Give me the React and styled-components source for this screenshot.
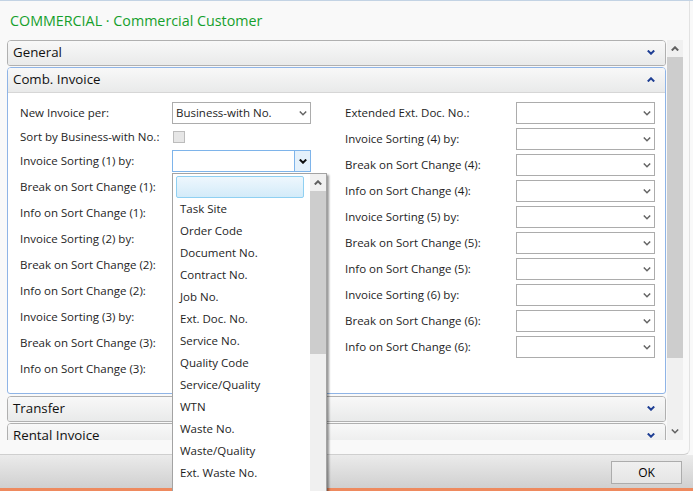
import React from 'react';
import styled, { createGlobalStyle, css } from 'styled-components';

const GlobalStyle = createGlobalStyle`
  html, body {
    margin: 0;
    padding: 0;
    background: #f9f9f9;
  }
  body {
    font-family: 'Open Sans', 'Noto Sans', sans-serif;
    font-size: 11.5px;
    color: #1e1e1e;
  }
`;

const leftRows = [
  { label: 'New Invoice per:', kind: 'select', value: 'Business-with No.' },
  { label: 'Sort by Business-with No.:', kind: 'check', h: 22 },
  { label: 'Invoice Sorting (1) by:', kind: 'focus' },
  { label: 'Break on Sort Change (1):', kind: 'select' },
  { label: 'Info on Sort Change (1):', kind: 'select' },
  { label: 'Invoice Sorting (2) by:', kind: 'select' },
  { label: 'Break on Sort Change (2):', kind: 'select' },
  { label: 'Info on Sort Change (2):', kind: 'select' },
  { label: 'Invoice Sorting (3) by:', kind: 'select' },
  { label: 'Break on Sort Change (3):', kind: 'select' },
  { label: 'Info on Sort Change (3):', kind: 'select' },
];

const rightRows = [
  'Extended Ext. Doc. No.:',
  'Invoice Sorting (4) by:',
  'Break on Sort Change (4):',
  'Info on Sort Change (4):',
  'Invoice Sorting (5) by:',
  'Break on Sort Change (5):',
  'Info on Sort Change (5):',
  'Invoice Sorting (6) by:',
  'Break on Sort Change (6):',
  'Info on Sort Change (6):',
];

const options = [
  'Task Site',
  'Order Code',
  'Document No.',
  'Contract No.',
  'Job No.',
  'Ext. Doc. No.',
  'Service No.',
  'Quality Code',
  'Service/Quality',
  'WTN',
  'Waste No.',
  'Waste/Quality',
  'Ext. Waste No.',
  'Notification No.',
];

const Chevron = ({ up, color = '#1f3f94', sw = 2 }) => (
  <svg width="8" height="5" viewBox="0 0 8 5">
    <polyline
      points={up ? '0.8,4.5 4,1.3 7.2,4.5' : '0.8,0.5 4,3.7 7.2,0.5'}
      fill="none"
      stroke={color}
      strokeWidth={sw}
    />
  </svg>
);

const Window = styled.div`
  position: relative;
  width: 693px;
  height: 491px;
  border-top: 1px solid #c3d3e4;
  box-sizing: border-box;
  display: flex;
  flex-direction: column;
  overflow: hidden;
`;

const Content = styled.div`
  height: 454px;
  flex: none;
  margin-right: 3px;
  border-right: 1px solid #e2e2e2;
  border-bottom: 1px solid #cfcfcf;
  border-bottom-right-radius: 6px;
  box-sizing: border-box;
`;

const Title = styled.div`
  height: 39px;
  padding: 9px 0 0 10px;
  box-sizing: border-box;
  font-size: 14.3px;
  line-height: 22px;
  color: #15a02c;
`;

const Main = styled.div`
  display: flex;
  height: 400px;
  padding-left: 7px;
`;

const Viewport = styled.div`
  width: 659px;
  height: 400px;
  overflow: hidden;
  display: flex;
  flex-direction: column;
  gap: 1px;
`;

const ScrollBar = styled.div`
  width: 16px;
  flex: none;
  margin-left: 1px;
  background: #f0f0f0;
  display: flex;
  flex-direction: column;
  height: ${(p) => p.$h}px;
`;

const ScrollButton = styled.div`
  height: 17px;
  flex: none;
  display: flex;
  align-items: center;
  justify-content: center;
`;

const Thumb = styled.div`
  height: ${(p) => p.$h}px;
  flex: none;
  background: #cdcdcd;
`;

const Track = styled.div`
  flex: 1;
`;

const Panel = styled.div`
  flex: none;
  border: 1px solid ${(p) => (p.$open ? '#8fb4e6' : '#b0b0b0')};
  border-radius: 4px 4px 3px 3px;
  background: #fff;
  overflow: hidden;
  ${(p) =>
    p.$gapAfter &&
    css`
      margin-bottom: 1px;
    `}
`;

const PanelHeader = styled.div`
  height: 24px;
  box-sizing: border-box;
  display: flex;
  align-items: center;
  justify-content: space-between;
  padding: 0 10px 2px 5px;
  background: linear-gradient(#f8f8f8, #e9eaea);
  font-size: 13.3px;
  color: #111;
  ${(p) =>
    p.$open &&
    css`
      height: 25px;
      border-bottom: 1px solid #d6d6d6;
    `}
`;

const PanelBody = styled.div`
  display: flex;
  gap: 34px;
  padding: 7px 9px 11px 12px;
`;

const Column = styled.div`
  display: flex;
  flex-direction: column;
`;

const Row = styled.div`
  display: flex;
  align-items: center;
  height: ${(p) => p.$h || 26}px;
`;

const Label = styled.div`
  width: ${(p) => p.$w}px;
  flex: none;
  white-space: nowrap;
  padding-bottom: 1px;
`;

const Field = styled.div`
  width: 139px;
  height: 22px;
  box-sizing: border-box;
  display: flex;
  align-items: stretch;
  background: #fff;
  border: 1px solid ${(p) => (p.$focus ? '#7eb4ea' : '#acacac')};
`;

const FieldText = styled.div`
  flex: 1;
  padding-left: 3px;
  line-height: 19px;
  white-space: nowrap;
  overflow: hidden;
`;

const FieldButton = styled.div`
  width: 15px;
  display: flex;
  align-items: center;
  justify-content: center;
  ${(p) =>
    p.$focus &&
    css`
      background: #e5f1fb;
      border-left: 1px solid #7eb4ea;
    `}
`;

const Check = styled.div`
  width: 12px;
  height: 12px;
  margin-left: 1px;
  box-sizing: border-box;
  background: #e6e6e6;
  border: 1px solid #bcbcbc;
`;

const Footer = styled.div`
  flex: 1;
  display: flex;
  justify-content: flex-end;
  align-items: flex-start;
  padding: 6px 11px 0 0;
  background: linear-gradient(#ebebeb, #d0d0d0);
`;

const OkButton = styled.div`
  width: 71px;
  height: 23px;
  box-sizing: border-box;
  border: 1px solid #acacac;
  background: linear-gradient(#f0f0f0, #e5e5e5);
  display: flex;
  align-items: center;
  justify-content: center;
  font-size: 12px;
  color: #000;
`;

const AccentLine = styled.div`
  height: 3px;
  flex: none;
  background: #ee8a5f;
`;

const DropList = styled.div`
  position: absolute;
  left: 172px;
  top: 172px;
  width: 155px;
  height: 340px;
  box-sizing: border-box;
  border: 1px solid #a3a3a3;
  background: #fff;
  box-shadow: 2px 2px 2px rgba(0, 0, 0, 0.4);
  display: flex;
`;

const Options = styled.div`
  flex: 1;
  padding: 2px 5px 0 3px;
`;

const Option = styled.div`
  height: 22px;
  box-sizing: border-box;
  padding-left: 4px;
  line-height: 21px;
  white-space: nowrap;
  ${(p) =>
    p.$selected &&
    css`
      border: 1px solid #8fd0f2;
      border-radius: 2px;
      background: linear-gradient(#eef7fd, #d3ebf9);
    `}
`;

const FieldSelect = ({ value, focus }) => (
  <Field $focus={focus}>
    <FieldText>{value}</FieldText>
    <FieldButton $focus={focus}>
      <Chevron color={focus ? '#111' : '#666'} sw={focus ? 2 : 1.5} />
    </FieldButton>
  </Field>
);

const CollapsedPanel = ({ title }) => (
  <Panel>
    <PanelHeader>
      {title}
      <Chevron />
    </PanelHeader>
  </Panel>
);

export default function App() {
  return (
    <>
      <GlobalStyle />
      <Window>
        <Content>
          <Title>COMMERCIAL · Commercial Customer</Title>
          <Main>
            <Viewport>
              <CollapsedPanel title="General" />
              <Panel $open $gapAfter>
                <PanelHeader $open>
                  Comb. Invoice
                  <Chevron up />
                </PanelHeader>
                <PanelBody>
                  <Column>
                    {leftRows.map((r) => (
                      <Row key={r.label} $h={r.h}>
                        <Label $w={152}>{r.label}</Label>
                        {r.kind === 'check' ? (
                          <Check />
                        ) : (
                          <FieldSelect value={r.value} focus={r.kind === 'focus'} />
                        )}
                      </Row>
                    ))}
                  </Column>
                  <Column>
                    {rightRows.map((label) => (
                      <Row key={label}>
                        <Label $w={171}>{label}</Label>
                        <FieldSelect />
                      </Row>
                    ))}
                  </Column>
                </PanelBody>
              </Panel>
              <CollapsedPanel title="Transfer" />
              <CollapsedPanel title="Rental Invoice" />
            </Viewport>
            <ScrollBar $h={400}>
              <ScrollButton>
                <Chevron up color="#606060" />
              </ScrollButton>
              <Thumb $h={301} />
              <Track />
              <ScrollButton>
                <Chevron color="#606060" sw={1.5} />
              </ScrollButton>
            </ScrollBar>
          </Main>
        </Content>
        <Footer>
          <OkButton>OK</OkButton>
        </Footer>
        <AccentLine />

        <DropList>
          <Options>
            <Option $selected />
            {options.map((o) => (
              <Option key={o}>{o}</Option>
            ))}
          </Options>
          <ScrollBar $h={338}>
            <ScrollButton>
              <Chevron up color="#606060" />
            </ScrollButton>
            <Thumb $h={163} />
            <Track />
          </ScrollBar>
        </DropList>
      </Window>
    </>
  );
}
